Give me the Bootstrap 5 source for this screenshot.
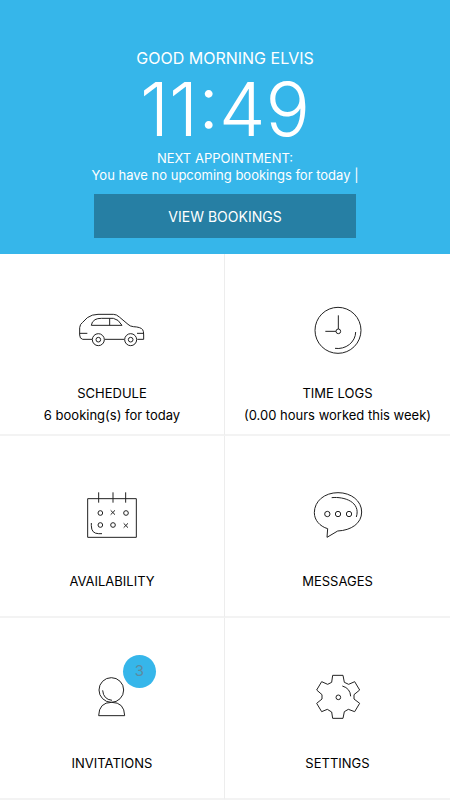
<!DOCTYPE html>
<html lang="en">
<head>
<meta charset="utf-8">
<meta name="viewport" content="width=device-width, initial-scale=1">
<title>Dashboard</title>
<link href="https://cdn.jsdelivr.net/npm/bootstrap@5.3.0/dist/css/bootstrap.min.css" rel="stylesheet">
<style>
body { font-family: Inter, "Open Sans", sans-serif; font-size: 13px; color: #000; background: #fff; }
.hero { background: #36b6ea; padding: 48px 20px 16px; }
.greeting { font-size: 16px; line-height: 20px; font-weight: 400; }
.clock { font-size: 74px; line-height: 82px; font-weight: 300; }
.next { font-size: 13px; line-height: 17px; }
.btn-bookings { --bs-btn-color: #fff; --bs-btn-bg: #267fa4; --bs-btn-border-color: #267fa4; --bs-btn-hover-color: #fff; --bs-btn-hover-bg: #20708f; width: 64%; height: 44px; margin-top: 10px; font-size: 14px; }
.tile { min-height: 182px; padding-top: 48px; border-bottom: 2px solid #f3f3f3; }
.tile-start { border-right: 1px solid #ededed; }
.tile-top { padding-top: 46px; }
.tile-title { margin-top: 27px; font-size: 13px; line-height: 20px; }
.tile-top .tile-title { margin-top: 23px; }
.tile-note { line-height: 24px; }
.tile svg { display: block; fill: none; stroke: #222; stroke-width: 3; }
.count { top: -11px; left: 44px; width: 33px; height: 33px; background: #36b6ea; color: #5d8ba0; font-size: 15px; }
</style>
</head>
<body>
<header class="hero text-white text-center d-flex flex-column align-items-center">
  <h1 class="greeting mb-0">GOOD MORNING ELVIS</h1>
  <time class="clock">11:49</time>
  <div class="next">NEXT APPOINTMENT:</div>
  <div class="next">You have no upcoming bookings for today |</div>
  <button type="button" class="btn btn-bookings rounded-0">VIEW BOOKINGS</button>
</header>
<main class="row row-cols-2 g-0 text-center">
  <a href="#schedule" class="col tile tile-start tile-top d-flex flex-column align-items-center text-reset text-decoration-none">
    <svg width="85" height="60" viewBox="0 -15 255 180" aria-hidden="true">
      <path d="M66 103H38Q29 101 29 90V68Q30 57 38 52L52 38Q66 28 84 28H130Q140 28 148 36L174 58Q180 64 190 65Q212 66 218 74Q221 78 221 90V103H202M163 103H104M29 85H52M221 85H201"/>
      <path d="M64 61Q65 50 75 44Q82 40 94 40H130Q145 42 156 61ZM119 40V61"/>
      <circle cx="85" cy="104" r="18"/><circle cx="85" cy="104" r="7"/>
      <circle cx="182" cy="104" r="18"/><circle cx="182" cy="104" r="7"/>
    </svg>
    <span class="tile-title">SCHEDULE</span>
    <span class="tile-note">6 booking(s) for today</span>
  </a>
  <a href="#time-logs" class="col tile tile-top d-flex flex-column align-items-center text-reset text-decoration-none">
    <svg width="66" height="60" viewBox="0 0 198 180" aria-hidden="true">
      <circle cx="99" cy="91" r="69"/><circle cx="100" cy="94" r="7"/>
      <path d="M100 87V46M93 94H61M152 96A54 50 0 0 1 90 145"/>
    </svg>
    <span class="tile-title">TIME LOGS</span>
    <span class="tile-note">(0.00 hours worked this week)</span>
  </a>
  <a href="#availability" class="col tile tile-start d-flex flex-column align-items-center text-reset text-decoration-none">
    <svg width="64" height="60" viewBox="0 -3 192 180" aria-hidden="true">
      <path d="M23 41H169V157H23ZM56 22V53M99 22V53M137 22V53M34 114V122Q34 146 56 146H66M92 76L105 89M105 76L92 89M131 115L144 128M144 115L131 128"/>
      <circle cx="61" cy="84" r="7"/><circle cx="138" cy="84" r="7"/>
      <circle cx="61" cy="120" r="7"/><circle cx="99" cy="120" r="7"/>
    </svg>
    <span class="tile-title">AVAILABILITY</span>
  </a>
  <a href="#messages" class="col tile d-flex flex-column align-items-center text-reset text-decoration-none">
    <svg width="66" height="60" viewBox="0 -3 198 180" aria-hidden="true">
      <path d="M68 131C44 124 28 105 28 83C28 48 59 23 99 23S170 48 170 81C170 115 139 136 98 138L66 157ZM80 38C118 34 168 51 154 96"/>
      <circle cx="67" cy="87" r="8"/><circle cx="99" cy="87" r="8"/><circle cx="132" cy="87" r="8"/>
    </svg>
    <span class="tile-title">MESSAGES</span>
  </a>
  <a href="#invitations" class="col tile tile-start d-flex flex-column align-items-center text-reset text-decoration-none">
    <span class="position-relative">
      <svg width="66" height="60" viewBox="0 3 198 180" aria-hidden="true">
        <circle cx="97" cy="75" r="37"/>
        <path d="M71 76Q73 103 99 106M59 152Q60 112 98 112T137 152Z"/>
      </svg>
      <span class="count position-absolute rounded-circle d-flex align-items-center justify-content-center">3</span>
    </span>
    <span class="tile-title">INVITATIONS</span>
  </a>
  <a href="#settings" class="col tile d-flex flex-column align-items-center text-reset text-decoration-none">
    <svg width="66" height="60" viewBox="0 3 198 180" aria-hidden="true">
      <path d="M83 31H114L118 52L131 58L149 50L164 75L147 89V102L164 115L149 140L130 133L118 140L114 160H83L80 141L67 133L50 140L35 115L51 102V89L35 75L50 50L68 58L80 52Z"/>
      <circle cx="100" cy="97" r="7"/><path d="M112 63Q136 70 137 94"/>
    </svg>
    <span class="tile-title">SETTINGS</span>
  </a>
</main>
<script src="https://cdn.jsdelivr.net/npm/bootstrap@5.3.0/dist/js/bootstrap.bundle.min.js"></script>
</body>
</html>
